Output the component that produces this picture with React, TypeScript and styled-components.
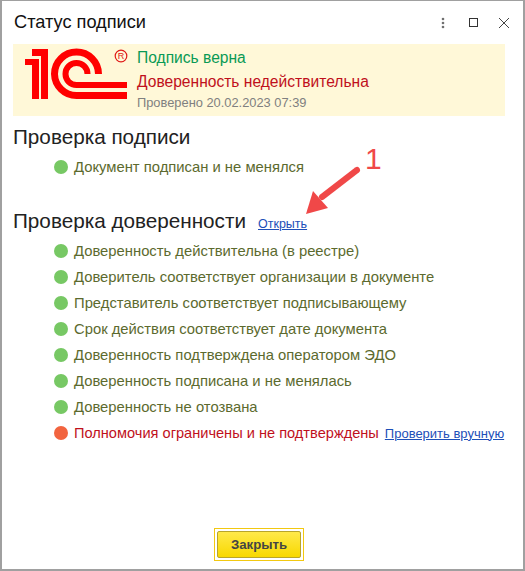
import React from "react";
import styled, { createGlobalStyle } from "styled-components";

interface ToneProps {
  $tone: "ok" | "bad";
}

const checks = [
  "Доверенность действительна (в реестре)",
  "Доверитель соответствует организации в документе",
  "Представитель соответствует подписывающему",
  "Срок действия соответствует дате документа",
  "Доверенность подтверждена оператором ЭДО",
  "Доверенность подписана и не менялась",
  "Доверенность не отозвана",
];

const GlobalStyle = createGlobalStyle`
  html, body {
    margin: 0;
    padding: 0;
    background: #fff;
  }
  body {
    font-family: "Liberation Sans", Arial, sans-serif;
  }
`;

const Window = styled.div`
  position: relative;
  box-sizing: border-box;
  width: 525px;
  height: 571px;
  display: flex;
  flex-direction: column;
  background: #fff;
  border: solid #a0a0a0;
  border-width: 1px 2px 2px 2px;
  padding: 0 18px 0 11px;
`;

const TitleBar = styled.div`
  display: flex;
  align-items: center;
  justify-content: space-between;
  height: 43px;
`;

const Title = styled.div`
  font-size: 18.2px;
  color: #111;
  padding-left: 1px;
`;

const WindowButtons = styled.div`
  display: flex;
  align-items: center;
  margin-right: -14px;
`;

const WindowButton = styled.span`
  display: flex;
  align-items: center;
  justify-content: center;
  width: 30.5px;
`;

const Banner = styled.div`
  display: flex;
  height: 72px;
  background: #fff8d8;
  padding-left: 12px;
`;

const LogoSlot = styled.div`
  margin-top: 2px;
  height: 54px;
`;

const BannerText = styled.div`
  display: flex;
  flex-direction: column;
  margin-left: 8px;
  padding-top: 2px;
`;

const StatusLine = styled.div<ToneProps>`
  font-size: 15.6px;
  line-height: 24px;
  color: ${({ $tone }) => ($tone === "ok" ? "#0a9a55" : "#c0101c")};
`;

const CheckedAt = styled.div`
  font-size: 12.85px;
  line-height: 18px;
  color: #808080;
`;

const Section = styled.div`
  margin-top: 8px;
  & + & {
    margin-top: 28px;
  }
`;

const SectionHeader = styled.div`
  display: flex;
  align-items: baseline;
  gap: 12px;
  height: 26px;
  margin-bottom: 4px;
  font-size: 20.7px;
  line-height: 26px;
  color: #222;
`;

const Row = styled.div`
  display: flex;
  align-items: center;
  height: 26px;
  padding-left: 41px;
`;

const Dot = styled.span<ToneProps>`
  width: 14px;
  height: 14px;
  border-radius: 50%;
  flex: none;
  margin-right: 6px;
  background: ${({ $tone }) => ($tone === "ok" ? "#77c864" : "#f2643f")};
`;

const RowText = styled.span<ToneProps>`
  font-size: ${({ $tone }) => ($tone === "ok" ? "14.8px" : "14.6px")};
  color: ${({ $tone }) => ($tone === "ok" ? "#5c6a2e" : "#c0101c")};
`;

const Link = styled.a`
  color: #1d4fb8;
  text-decoration: underline;
  font-size: 12.5px;
`;

const RowLink = styled(Link)`
  margin-left: 6px;
  font-size: 13px;
`;

const Footer = styled.div`
  margin-top: auto;
  display: flex;
  justify-content: center;
  padding-bottom: 8px;
`;

const ButtonFrame = styled.div`
  border: 1px solid #f2c811;
  padding: 2px;
`;

const CloseButton = styled.button`
  display: block;
  width: 84px;
  height: 27px;
  padding: 0;
  font-family: inherit;
  font-size: 13.2px;
  font-weight: 700;
  color: #444;
  border: 1px solid #b8a52a;
  border-radius: 2px;
  background: linear-gradient(#ffe94a, #f8d800);
`;

const Annotation = styled.div`
  position: absolute;
  left: 298px;
  top: 142px;
  width: 90px;
  height: 74px;
`;

const AnnotationNumber = styled.span`
  position: absolute;
  left: 65px;
  top: 1px;
  font-size: 30px;
  line-height: 30px;
  color: #f04848;
`;

const Logo = () => (
  <svg width="104" height="54" viewBox="25 46 104 54" fill="none">
    <path d="M41 99V49H32V56H41V49H48V99Z" fill="#ff0000" />
    <path d="M32 59H39V99H32V65H25V59H32Z" fill="#ff0000" />
    <path d="M98.5 74A22 22 0 0 0 54.5 74A22 22 0 0 0 76.5 95.5H127" stroke="#ff0000" strokeWidth="7" />
    <path d="M87.5 74A11 11 0 0 0 65.5 74A11 11 0 0 0 76.5 85H127" stroke="#ff0000" strokeWidth="6" />
    <circle cx="121" cy="56" r="5.8" stroke="#e01818" strokeWidth="1.2" />
    <text x="117.8" y="59.3" fontSize="9" fill="#e01818" fontFamily="Liberation Sans">R</text>
  </svg>
);

const App = () => (
  <>
    <GlobalStyle />
    <Window>
      <TitleBar>
        <Title>Статус подписи</Title>
        <WindowButtons>
          <WindowButton>
            <svg width="4" height="12" viewBox="0 0 4 12">
              <circle cx="2" cy="2" r="1.3" fill="#707070" />
              <circle cx="2" cy="6" r="1.3" fill="#707070" />
              <circle cx="2" cy="10" r="1.3" fill="#707070" />
            </svg>
          </WindowButton>
          <WindowButton>
            <svg width="10" height="10" viewBox="0 0 10 10">
              <rect x="1.5" y="0.5" width="8" height="8" fill="none" stroke="#333" />
            </svg>
          </WindowButton>
          <WindowButton>
            <svg width="12" height="12" viewBox="0 0 12 12">
              <path d="M1 1L11 11M11 1L1 11" stroke="#444" />
            </svg>
          </WindowButton>
        </WindowButtons>
      </TitleBar>
      <Banner>
        <LogoSlot>
          <Logo />
        </LogoSlot>
        <BannerText>
          <StatusLine $tone="ok">Подпись верна</StatusLine>
          <StatusLine $tone="bad">Доверенность недействительна</StatusLine>
          <CheckedAt>Проверено 20.02.2023 07:39</CheckedAt>
        </BannerText>
      </Banner>
      <Section>
        <SectionHeader>Проверка подписи</SectionHeader>
        <Row>
          <Dot $tone="ok" />
          <RowText $tone="ok">Документ подписан и не менялся</RowText>
        </Row>
      </Section>
      <Section>
        <SectionHeader>
          Проверка доверенности <Link>Открыть</Link>
        </SectionHeader>
        {checks.map((text) => (
          <Row key={text}>
            <Dot $tone="ok" />
            <RowText $tone="ok">{text}</RowText>
          </Row>
        ))}
        <Row>
          <Dot $tone="bad" />
          <RowText $tone="bad">Полномочия ограничены и не подтверждены</RowText>
          <RowLink>Проверить вручную</RowLink>
        </Row>
      </Section>
      <Footer>
        <ButtonFrame>
          <CloseButton>Закрыть</CloseButton>
        </ButtonFrame>
      </Footer>
      <Annotation>
        <AnnotationNumber>1</AnnotationNumber>
        <svg width="62" height="74" viewBox="0 0 62 74">
          <path d="M57 27L22 54" stroke="#f04848" strokeWidth="6" strokeLinecap="round" />
          <path d="M6 71L13 48L28 65Z" fill="#f04848" />
        </svg>
      </Annotation>
    </Window>
  </>
);

export default App;
